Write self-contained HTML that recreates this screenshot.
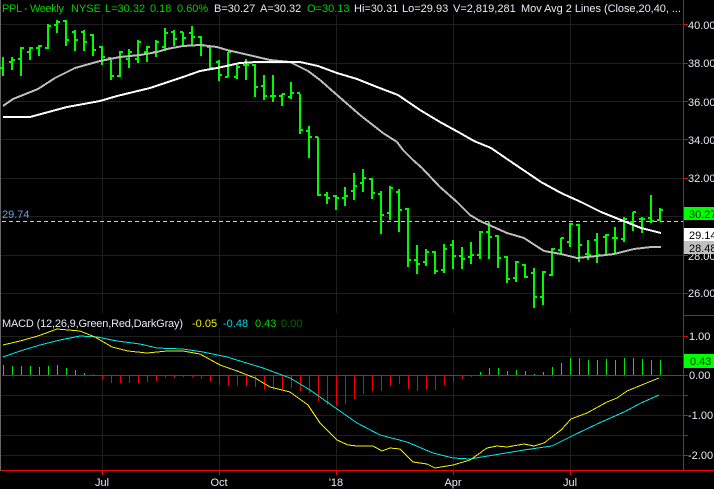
<!DOCTYPE html>
<html><head><meta charset="utf-8"><style>
html,body{margin:0;padding:0;background:#000;width:714px;height:489px;overflow:hidden}
svg{display:block}
text{font-family:"Liberation Sans",Arial,sans-serif;font-size:11px}
</style></head><body>
<svg width="714" height="489" viewBox="0 0 714 489" xmlns="http://www.w3.org/2000/svg">
<rect width="714" height="489" fill="#000"/>
<rect x="0" y="0" width="1" height="471" fill="#666"/>
<g stroke="#1f1f1f" stroke-width="1" shape-rendering="crispEdges" fill="none">
<path d="M1 24.5H683M1 63.5H683M1 101.5H683M1 139.5H683M1 178.5H683M1 216.5H683M1 255.5H683M1 293.5H683"/>
<path d="M1 336.5H683M1 356.5H683M1 395.5H683M1 415.5H683M1 435.5H683M1 455.5H683"/>
<path d="M102.5 14V313M219.5 14V313M336.5 14V313M453.5 14V313M570.5 14V313"/>
<path d="M102.5 329V470M219.5 329V470M336.5 329V470M453.5 329V470M570.5 329V470"/>
</g>
<path d="M2 221.5H683" stroke="#c4cee0" stroke-width="1" stroke-dasharray="4 3" shape-rendering="crispEdges" fill="none"/>
<g stroke="#00f800" stroke-width="2" fill="none" shape-rendering="crispEdges">
<path d="M3 57V76M0 68H3M12 57V70M9 62H12M12 60H15M21 47V76M18 59H21M21 48H24M30 47V60M27 52H30M30 48H33M39 45V56M36 48H39M39 46H42M48 24V49M45 48H48M48 26H51M57 20V33M54 25H57M57 22H60M66 20V46M63 21H66M66 40H69M75 30V51M72 32H75M75 40H78M84 30V51M81 32H84M84 42H87M93 34V56M90 35H93M93 50H96M102 46V65M99 47H102M102 57H105M111 60V80M108 58H111M111 76H114M120 51V77M117 76H120M120 52H123M129 49V68M126 59H129M129 52H132M138 40V63M135 59H138M138 42H141M147 46V62M144 52H147M147 47H150M156 40V57M153 52H156M156 42H159M165 28V51M162 47H165M165 33H168M174 30V46M171 32H174M174 39H177M183 32V46M180 32H183M183 38H186M192 26V46M189 33H192M192 37H195M201 36V56M198 37H201M201 45H204M210 47V69M207 47H210M210 68H213M219 60V81M216 62H219M219 75H222M228 52V77M225 77H228M228 52H231M237 65V79M234 77H237M237 67H240"/>
<path d="M246 59V80M243 65H246M246 65H249M255 64V97M252 65H255M255 87H258M264 75V100M261 86H264M264 96H267M273 75V102M270 96H273M273 96H276M282 94V106M279 96H282M282 94H285M291 82V99M288 97H291M291 93H294M300 94V134M297 93H300M300 130H303M309 126V158M306 131H309M309 137H312M318 137V196M315 137H318M318 195H321M327 192V204M324 195H327M327 198H330M336 195V210M333 196H336M336 198H339M345 187V206M342 198H345M345 196H348M354 173V200M351 191H354M354 186H357M363 169V192M360 183H363M363 178H366M372 178V199M369 179H372M372 193H375M381 191V234M378 194H381M381 215H384M390 186V220M387 213H390M390 188H393M399 189V232M396 192H399M399 210H402M408 208V267M405 209H408M408 260H411M417 245V274M414 260H417M417 264H420M426 249V266M423 262H426M426 252H429M435 251V274M432 252H435M435 271H438M444 244V273M441 270H444M444 249H447M453 240V269M450 245H453M453 256H456M462 247V269M459 256H462M462 259H465M471 242V264M468 257H471M471 255H474M480 231V259M477 255H480M480 232H483"/>
<path d="M489 222V259M486 232H489M489 237H492M498 235V268M495 236H498M498 258H501M507 256V283M504 257H507M507 279H510M516 261V282M513 278H516M516 262H519M525 264V278M522 265H525M525 277H528M534 268V308M531 273H534M534 297H537M543 271V305M540 297H543M543 272H546M552 248V276M549 275H552M552 249H555M561 238V254M558 250H561M561 238H564M570 223V247M567 242H570M570 224H573M579 224V262M576 225H579M579 245H582M588 240V260M585 254H588M588 255H591M597 233V263M594 240H597M597 255H600M606 234V254M603 237H606M606 235H609M615 227V253M612 238H615M615 238H618M624 217V242M621 239H624M624 219H627M633 212V231M630 222H633M633 212H636M642 217V233M639 219H642M642 219H645M651 195V223M648 218H651M651 221H654M660 208V221M657 220H660M660 210H663"/>
</g>
<g fill="none" stroke-width="2" stroke-linejoin="round" shape-rendering="crispEdges">
<polyline stroke="#bcbcbc" points="3,106 13,99 38,89 55,78 75,68 100,61 120,57 140,55 157,52 167,49 183,46 200,45 217,47 227,50 240,53 253,56 270,60 290,62 308,71 320,80 337,95 360,115 383,133 397,142 403,150 413,160 422,168 440,187 457,202 470,215 480,221 489,225 507,233 524,238 544,251 561,254 577,258 597,256 614,254 634,249 651,247 661,247"/>
<polyline stroke="#fff" points="3,117 30,117 67,107 100,101 117,96 150,88 183,77 200,71 217,68 240,63 257,62 300,62 318,66 337,73 357,79 377,87 398,95 420,110 440,122 460,133 474,141 491,148 507,159 541,182 561,193 581,202 601,212 621,220 641,228 661,233"/>
</g>
<path d="M2 375.5H683" stroke="#008000" stroke-width="1" shape-rendering="crispEdges"/>
<g stroke="#00e800" stroke-width="1" shape-rendering="crispEdges" fill="none">
<path d="M3.5 375V365M12.5 375V366M21.5 375V366M30.5 375V366M39.5 375V367M48.5 375V366M57.5 375V365M66.5 375V368M75.5 375V370M84.5 375V373M93.5 375V374.5"/>
<path d="M480.5 375V372M489.5 375V368M498.5 375V368M507.5 375V371M516.5 375V370M525.5 375V371M534.5 375V374M543.5 375V372M552.5 375V367M561.5 375V363M570.5 375V358M579.5 375V358M588.5 375V360M597.5 375V360M606.5 375V359M615.5 375V360M624.5 375V358M633.5 375V358M642.5 375V359M651.5 375V360M660.5 375V360"/>
</g>
<path d="M102.5 376V379M111.5 376V383M120.5 376V383M129.5 376V383M138.5 376V383M147.5 376V382M156.5 376V381M165.5 376V378M174.5 376V378M183.5 376V377M192.5 376V377M201.5 376V379M210.5 376V382M219.5 376V385M228.5 376V386M237.5 376V386M246.5 376V386M255.5 376V387M264.5 376V389M273.5 376V390M282.5 376V389M291.5 376V388M300.5 376V391M309.5 376V393M318.5 376V401M327.5 376V405M336.5 376V406M345.5 376V404M354.5 376V399M363.5 376V394M372.5 376V391M381.5 376V391M390.5 376V386M399.5 376V384M408.5 376V389M417.5 376V391M426.5 376V390M435.5 376V390M444.5 376V385M453.5 376V382M462.5 376V379M471.5 376V377" stroke="#f00000" stroke-width="1" fill="none" shape-rendering="crispEdges"/>
<g fill="none" stroke-width="1" shape-rendering="crispEdges">
<polyline stroke="#00e8e8" points="3,357 20,351 40,345 60,340 80,336 97,337 117,341 140,344 157,348 183,349 203,352 227,357 240,361 263,368 290,378 310,390 337,409 357,423 380,435 407,442 433,453 453,458 470,459 494,455 524,450 552,446 574,435 597,424 624,412 641,403 659,395"/>
<polyline stroke="#f0f000" points="3,345 20,341 38,336 57,329 80,331 95,337 112,347 128,351 147,353 167,351 183,351 200,354 220,365 237,371 255,378 270,387 290,392 308,405 320,423 337,440 348,445 357,446 373,446 382,451 390,448 400,449 413,462 427,464 435,468 453,465 470,460 487,448 497,446 507,447 524,444 534,446 544,443 561,430 571,419 587,413 607,402 617,398 627,391 644,384 659,378"/>
</g>
<g stroke="#f00000" stroke-width="1" fill="none" shape-rendering="crispEdges">
<path d="M683.5 0V470M1 470.5H714M683 315.5H714"/>
<path d="M683 24.5H688M683 63.5H688M683 101.5H688M683 139.5H688M683 178.5H688M683 255.5H688M683 293.5H688M683 336.5H688M683 356.5H688M683 375.5H688M683 395.5H688M683 415.5H688M683 435.5H688M683 455.5H688"/>
<path d="M102.5 470V475M219.5 470V475M336.5 470V475M453.5 470V475M570.5 470V475"/>
</g>
<g fill="#e6eaf6">
<text x="688" y="29">40.00</text><text x="688" y="67">38.00</text><text x="688" y="106">36.00</text><text x="688" y="144">34.00</text><text x="688" y="182">32.00</text><text x="688" y="260">28.00</text><text x="688" y="297">26.00</text>
<text x="689" y="340">1.00</text><text x="689" y="379">0.00</text><text x="688" y="419">-1.00</text><text x="688" y="459">-2.00</text>
<text x="102" y="486" text-anchor="middle">Jul</text><text x="219" y="486" text-anchor="middle">Oct</text><text x="336" y="486" text-anchor="middle">'18</text><text x="453" y="486" text-anchor="middle">Apr</text><text x="570" y="486" text-anchor="middle">Jul</text>
<text x="214" y="12">B=30.27</text><text x="260" y="12">A=30.32</text><text x="354" y="12">Hi=30.31</text><text x="402" y="12">Lo=29.93</text><text x="453" y="12">V=2,819,281</text><text x="521" y="12" textLength="160" lengthAdjust="spacing">Mov Avg 2 Lines (Close,20,40, ...</text>
<text x="2" y="327" textLength="181" lengthAdjust="spacing">MACD (12,26,9,Green,Red,DarkGray)</text>
</g>
<g fill="#00d000">
<text x="2" y="12" textLength="62" lengthAdjust="spacing">PPL - Weekly</text><text x="71" y="12">NYSE</text><text x="105" y="12">L=30.32</text><text x="150" y="12">0.18</text><text x="177" y="12">0.60%</text><text x="307" y="12">O=30.13</text>
</g>
<text x="2" y="218" fill="#6a9ce0">29.74</text>
<text x="192" y="327" fill="#f0f000">-0.05</text><text x="223" y="327" fill="#00d8e8">-0.48</text><text x="255" y="327" fill="#00d000">0.43</text><text x="281" y="327" fill="#006800">0.00</text>
<rect x="684" y="207" width="30" height="13" fill="#00ff00"/><text x="689" y="218" fill="#003000">30.27</text>
<rect x="684" y="228" width="30" height="13" fill="#fff"/><text x="689" y="239" fill="#000">29.14</text>
<rect x="684" y="241" width="30" height="13" fill="#c0c0c0"/><text x="689" y="252" fill="#000">28.48</text>
<rect x="684" y="354" width="30" height="14" fill="#00ff00"/><text x="690" y="365" fill="#004000">0.43</text>
</svg>
</body></html>
